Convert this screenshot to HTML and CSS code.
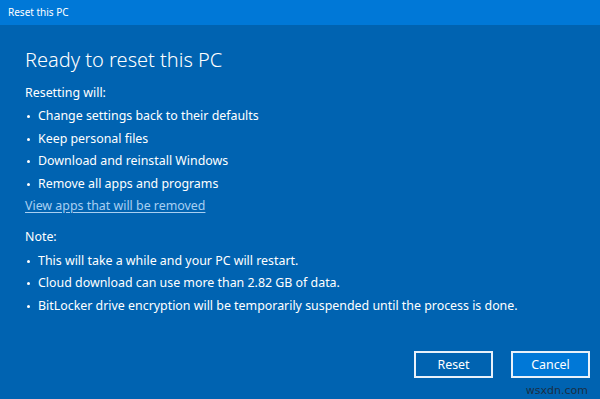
FILE: index.html
```html
<!DOCTYPE html>
<html>
<head>
<meta charset="utf-8">
<link rel="stylesheet" href="styles.css">
</head>
<body>
<div class="window">
  <div class="titlebar">Reset this PC</div>
  <div class="content">
    <h1 class="heading">Ready to reset this PC</h1>
    <p class="label">Resetting will:</p>
    <ul class="list">
      <li>Change settings back to their defaults</li>
      <li>Keep personal files</li>
      <li>Download and reinstall Windows</li>
      <li>Remove all apps and programs</li>
    </ul>
    <a class="link" href="#">View apps that will be removed</a>
    <p class="label note">Note:</p>
    <ul class="list">
      <li>This will take a while and your PC will restart.</li>
      <li>Cloud download can use more than 2.82 GB of data.</li>
      <li>BitLocker drive encryption will be temporarily suspended until the process is done.</li>
    </ul>
    <div class="actions">
      <button class="btn">Reset</button>
      <button class="btn primary">Cancel</button>
    </div>
  </div>
  <div class="watermark">wsxdn.com</div>
</div>
</body>
</html>
```

FILE: styles.css
```css
html, body {
  margin: 0;
  padding: 0;
}
body {
  width: 600px;
  height: 399px;
  overflow: hidden;
  background: #0063b1;
  font-family: "Noto Sans", "Open Sans", sans-serif;
  color: #fff;
}
.window {
  position: relative;
  width: 600px;
  height: 399px;
  display: flex;
  flex-direction: column;
}
.titlebar {
  height: 25px;
  background: #0078d7;
  font-size: 10px;
  line-height: 24px;
  padding-left: 8px;
  color: #fff;
}
.content {
  flex: 1;
  padding: 21px 0 0 25px;
  display: flex;
  flex-direction: column;
}
.heading {
  margin: 0;
  font-weight: 300;
  font-size: 20px;
  line-height: 28px;
  height: 28px;
  font-family: "Noto Sans", sans-serif;
  color: #fff;
}
.label {
  margin: 8px 0 0 0;
  font-size: 12.4px;
  line-height: 22.4px;
}
.note {
  margin-top: 9px;
}
.list {
  margin: 1px 0 0 0;
  padding: 0;
  list-style: none;
  font-size: 12.4px;
  line-height: 22.4px;
}
.list li {
  position: relative;
  padding-left: 13px;
}
.list li::before {
  content: "";
  position: absolute;
  left: 2px;
  top: 10px;
  width: 3px;
  height: 3px;
  border-radius: 50%;
  background: #fff;
}
.link {
  font-size: 12.4px;
  line-height: 22.4px;
  color: #a8cff2;
  text-decoration: underline;
  text-underline-offset: 2px;
  align-self: flex-start;
}
.actions {
  display: flex;
  justify-content: flex-end;
  gap: 18px;
  padding-right: 10px;
  margin-top: 34px;
}
.btn {
  width: 79px;
  height: 27px;
  box-sizing: border-box;
  border: 2px solid #e8f1fa;
  background: #0063b1;
  color: #fff;
  font-family: "Noto Sans", sans-serif;
  font-size: 12.4px;
  padding: 0;
}
.btn.primary {
  background: #0078d7;
}
.watermark {
  position: absolute;
  right: 12px;
  bottom: 2px;
  font-family: "DejaVu Sans", sans-serif;
  font-size: 11px;
  color: #1b2f45;
}
```
